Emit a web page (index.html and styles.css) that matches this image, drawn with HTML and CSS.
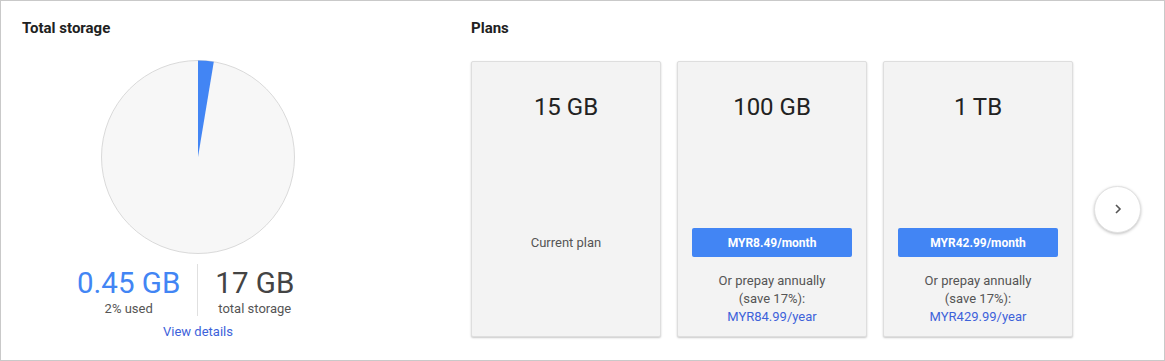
FILE: index.html
```html
<!DOCTYPE html>
<html lang="en">
<head>
    <meta charset="UTF-8">
    <meta content="width=device-width, initial-scale=1.0" name="viewport">
    <title>Storage</title>
    <link rel="stylesheet" href="styles.css">
</head>
<body>
<div class="frame">
    <div class="storage">
        <h2 class="section-title">Total storage</h2>

        <svg class="pie" width="196" height="196" viewBox="0 0 196 196">
            <circle cx="98" cy="98" r="96.5" fill="#f7f7f7" stroke="#dadada" stroke-width="1"></circle>
            <path d="M98 98 L98 1.5 A96.5 96.5 0 0 1 113.8 2.8 Z" fill="#4285f4"></path>
        </svg>

        <div class="stats">
            <div class="stat">
                <div class="stat-value used">0.45 GB</div>
                <div class="stat-label">2% used</div>
            </div>
            <div class="stat stat-total">
                <div class="stat-value">17 GB</div>
                <div class="stat-label">total storage</div>
            </div>
        </div>

        <a class="details-link" href="#">View details</a>
    </div>

    <div class="plans">
        <h2 class="section-title">Plans</h2>

        <div class="plan-row">
            <div class="plan-card">
                <div class="plan-size">15 GB</div>
                <div class="plan-current">Current plan</div>
            </div>

            <div class="plan-card">
                <div class="plan-size">100 GB</div>
                <button class="plan-btn">MYR8.49/month</button>
                <div class="plan-note">
                    Or prepay annually<br>
                    (save 17%):<br>
                    <a href="#">MYR84.99/year</a>
                </div>
            </div>

            <div class="plan-card">
                <div class="plan-size">1 TB</div>
                <button class="plan-btn">MYR42.99/month</button>
                <div class="plan-note">
                    Or prepay annually<br>
                    (save 17%):<br>
                    <a href="#">MYR429.99/year</a>
                </div>
            </div>

            <button class="next-btn" aria-label="Next">
                <svg width="8" height="10" viewBox="0 0 8 10">
                    <path d="M2 1 L6 5 L2 9" fill="none" stroke="#555" stroke-width="1.6"></path>
                </svg>
            </button>
        </div>
    </div>
</div>
</body>
</html>
```

FILE: styles.css
```css
body {
    margin: 0;
    font-family: Roboto, 'Liberation Sans', sans-serif;
    background-color: white;
}

.frame {
    box-sizing: border-box;
    width: 1165px;
    height: 361px;
    border: 1px solid #c9c9c9;
    padding: 18px 0 0 21px;
    display: flex;
}

.section-title {
    margin: 0;
    font-size: 15px;
    line-height: 18px;
    font-weight: 700;
    color: #212121;
}

/* 左侧：总存储 */
.storage {
    width: 352px;
    display: flex;
    flex-direction: column;
}

.storage .section-title {
    align-self: flex-start;
}

.pie {
    display: block;
    margin: 22px auto 0;
}

.stats {
    display: flex;
    margin: 9px 0 0 38px;
}

.stat {
    padding: 4px 17px 0;
    text-align: center;
}

.stat-total {
    border-left: 1px solid #e0e0e0;
}

.stat-value {
    font-size: 29.5px;
    line-height: 30px;
    color: #444;
}

.stat-value.used {
    color: #4285f4;
}

.stat-label {
    margin-top: 4px;
    font-size: 13px;
    line-height: 14px;
    color: #555;
}

.details-link {
    align-self: center;
    margin-top: 8px;
    font-size: 13px;
    line-height: 16px;
    color: #3d62da;
    text-decoration: none;
}

/* 右侧：套餐 */
.plans {
    margin-left: 97px;
}

.plan-row {
    margin-top: 24px;
    display: flex;
    align-items: center;
    gap: 16px;
}

.plan-card {
    box-sizing: border-box;
    width: 190px;
    height: 276px;
    padding: 29px 14px 0;
    background-color: #f3f3f3;
    border: 1px solid #dedede;
    border-radius: 2px;
    box-shadow: 0 1px 2px rgba(0, 0, 0, 0.22);
    display: flex;
    flex-direction: column;
    text-align: center;
}

.plan-size {
    font-size: 24px;
    line-height: 32px;
    color: #222;
}

.plan-current {
    margin-top: 105px;
    font-size: 13px;
    line-height: 29px;
    color: #555;
}

.plan-btn {
    margin-top: 105px;
    height: 29px;
    border: none;
    border-radius: 2px;
    background-color: #4285f4;
    color: white;
    font-family: inherit;
    font-size: 12px;
    font-weight: 700;
    cursor: pointer;
}

.plan-note {
    margin-top: 15px;
    font-size: 13px;
    line-height: 18px;
    color: #555;
}

.plan-note a {
    color: #3d62da;
    text-decoration: none;
}

.next-btn {
    margin: 20px 0 0 5px;
    width: 47px;
    height: 47px;
    border-radius: 50%;
    border: 1px solid #e2e2e2;
    background-color: white;
    box-shadow: 0 1px 3px rgba(0, 0, 0, 0.25);
    display: flex;
    align-items: center;
    justify-content: center;
    padding: 0;
    cursor: pointer;
}
```
